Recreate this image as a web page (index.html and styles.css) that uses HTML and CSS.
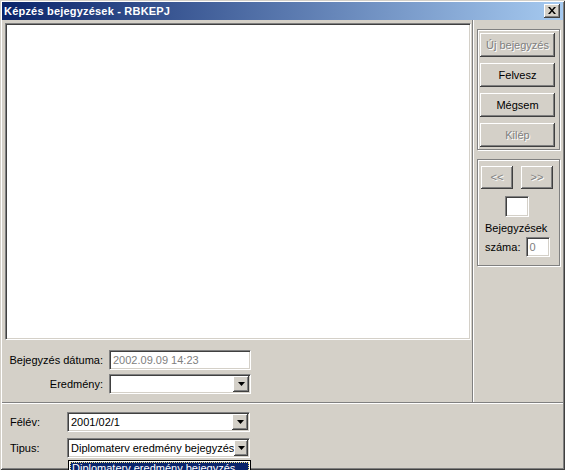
FILE: index.html
```html
<!DOCTYPE html>
<html lang="hu">
<head>
<meta charset="utf-8">
<title>Képzés bejegyzések - RBKEPJ</title>
<link rel="stylesheet" href="styles.css">
</head>
<body>
<div class="window">
  <div class="titlebar">
    <span class="title">Képzés bejegyzések - RBKEPJ</span>
    <span class="close"><svg width="8" height="7" viewBox="0 0 8 7"><path d="M0 0h2l2 2.5 2-2.5h2l-3 3.5 3 3.5h-2l-2-2.5-2 2.5h-2l3-3.5z" fill="#000"/></svg></span>
  </div>
  <div class="body">
    <div class="top">
      <div class="main">
        <div class="list"></div>
        <div class="fields">
          <label class="flabel">Bejegyzés dátuma:</label>
          <div class="edit disabled-text">2002.09.09 14:23</div>
          <label class="flabel">Eredmény:</label>
          <div class="combo">
            <span class="combo-text"></span>
            <span class="drop-btn"><svg width="7" height="4" viewBox="0 0 7 4"><path d="M0 0h7l-3.5 4z" fill="#000"/></svg></span>
          </div>
        </div>
      </div>
      <div class="vsep"></div>
      <div class="side">
        <div class="group group-actions">
          <div class="btn disabled">Új bejegyzés</div>
          <div class="btn">Felvesz</div>
          <div class="btn">Mégsem</div>
          <div class="btn disabled">Kilép</div>
        </div>
        <div class="group group-nav">
          <div class="nav-row">
            <div class="btn nav disabled">&lt;&lt;</div>
            <div class="btn nav disabled">&gt;&gt;</div>
          </div>
          <div class="edit pos"></div>
          <div class="count-label">Bejegyzések</div>
          <div class="count-row">
            <span>száma:</span>
            <div class="edit count disabled-text">0</div>
          </div>
        </div>
      </div>
    </div>
    <div class="hsep"></div>
    <div class="bottom">
      <div class="brow">
        <label class="blabel">Félév:</label>
        <div class="combo wide">
          <span class="combo-text">2001/02/1</span>
          <span class="drop-btn"><svg width="7" height="4" viewBox="0 0 7 4"><path d="M0 0h7l-3.5 4z" fill="#000"/></svg></span>
        </div>
      </div>
      <div class="brow">
        <label class="blabel">Tipus:</label>
        <div class="combo wide">
          <span class="combo-text">Diplomaterv eredmény bejegyzés</span>
          <span class="drop-btn"><svg width="7" height="4" viewBox="0 0 7 4"><path d="M0 0h7l-3.5 4z" fill="#000"/></svg></span>
          <div class="dropdown">
            <div class="dd-item">Diplomaterv eredmény bejegyzés</div>
          </div>
        </div>
      </div>
    </div>
  </div>
</div>
</body>
</html>
```
FILE: styles.css
```css
html, body {
  margin: 0;
  padding: 0;
  overflow: hidden;
  background: #d4d0c8;
}
body {
  font-family: "Liberation Sans", Arial, sans-serif;
  font-size: 11px;
  color: #000;
}
.window {
  position: relative;
  width: 565px;
  height: 470px;
  box-sizing: border-box;
  padding: 2px;
  background: #d4d0c8;
  box-shadow: inset 1px 1px #d4d0c8, inset -1px -1px #404040, inset 2px 2px #fff, inset -2px -2px #808080;
  display: flex;
  flex-direction: column;
}
.titlebar {
  height: 18px;
  flex: none;
  display: flex;
  align-items: center;
  justify-content: space-between;
  background: linear-gradient(to right, #0a246a, #a6caf0);
}
.title {
  color: #fff;
  font-weight: bold;
  font-size: 11px;
  padding-left: 2px;
  letter-spacing: 0.2px;
}
.close {
  width: 16px;
  height: 14px;
  margin-right: 3px;
  background: #d4d0c8;
  box-shadow: inset -1px -1px #404040, inset 1px 1px #fff, inset -2px -2px #808080;
  display: flex;
  align-items: center;
  justify-content: center;
  padding-bottom: 1px;
  box-sizing: border-box;
}
.body {
  flex: 1;
  display: flex;
  flex-direction: column;
}
.top {
  height: 382px;
  display: flex;
  flex: none;
}
.main {
  width: 470px;
  display: flex;
  flex-direction: column;
}
.list {
  margin: 3px 0 0 3px;
  width: 466px;
  height: 317px;
  box-sizing: border-box;
  background: #fff;
  border: 1px solid;
  border-color: #808080 #fff #fff #808080;
  box-shadow: inset 1px 1px #404040, inset -1px -1px #d4d0c8;
}
.fields {
  display: grid;
  grid-template-columns: 98px 142px;
  column-gap: 6px;
  row-gap: 4px;
  padding: 10px 0 0 3px;
}
.flabel {
  text-align: right;
  align-self: center;
}
.edit {
  height: 20px;
  box-sizing: border-box;
  background: #fff;
  border: 1px solid;
  border-color: #808080 #fff #fff #808080;
  box-shadow: inset 1px 1px #404040, inset -1px -1px #d4d0c8;
  padding: 0 3px;
  display: flex;
  align-items: center;
}
.disabled-text {
  color: #808080;
}
.combo {
  position: relative;
  height: 20px;
  box-sizing: border-box;
  background: #fff;
  border: 1px solid;
  border-color: #808080 #fff #fff #808080;
  box-shadow: inset 1px 1px #404040, inset -1px -1px #d4d0c8;
  display: flex;
  align-items: center;
  padding: 1px 1px 1px 3px;
}
.combo-text {
  flex: 1;
  white-space: nowrap;
}
.drop-btn {
  width: 16px;
  height: 16px;
  box-sizing: border-box;
  background: #d4d0c8;
  box-shadow: inset -1px -1px #404040, inset 1px 1px #fff, inset -2px -2px #808080;
  display: flex;
  align-items: center;
  justify-content: center;
}
.vsep {
  width: 2px;
  border-left: 1px solid #808080;
  border-right: 1px solid #fff;
  box-sizing: border-box;
}
.side {
  flex: 1;
  padding-left: 3px;
  display: flex;
  flex-direction: column;
}
.group {
  width: 83px;
  box-sizing: border-box;
  border: 1px solid #808080;
  box-shadow: inset 1px 1px #fff, 1px 1px #fff;
  margin-top: 9px;
}
.group-actions {
  height: 121px;
  padding: 3px 0 0 2px;
  display: flex;
  flex-direction: column;
  gap: 6px;
}
.btn {
  width: 75px;
  height: 24px;
  box-sizing: border-box;
  background: #d4d0c8;
  box-shadow: inset -1px -1px #404040, inset 1px 1px #fff, inset -2px -2px #808080;
  display: flex;
  align-items: center;
  justify-content: center;
  padding-bottom: 1px;
}
.btn.disabled {
  color: #808080;
  text-shadow: 1px 1px #fff;
}
.group-nav {
  height: 107px;
  padding: 6px 0 0 3px;
  display: flex;
  flex-direction: column;
}
.nav-row {
  display: flex;
  gap: 8px;
}
.btn.nav {
  width: 32px;
  height: 23px;
}
.edit.pos {
  width: 24px;
  height: 21px;
  margin: 7px 0 0 24px;
}
.count-label {
  margin: 5px 0 0 4px;
  line-height: 13px;
}
.count-row {
  display: flex;
  align-items: center;
  gap: 6px;
  margin: 2px 0 0 4px;
}
.edit.count {
  width: 24px;
  height: 20px;
  padding: 0 2px;
}
.hsep {
  height: 2px;
  flex: none;
  border-top: 1px solid #808080;
  border-bottom: 1px solid #fff;
  box-sizing: border-box;
}
.bottom {
  flex: 1;
  padding: 8px 0 0 8px;
  display: flex;
  flex-direction: column;
  gap: 6px;
}
.brow {
  display: flex;
  align-items: center;
}
.blabel {
  width: 57px;
}
.combo.wide {
  width: 183px;
}
.dropdown {
  position: absolute;
  left: 0;
  top: 21px;
  width: 183px;
  height: 11px;
  overflow: hidden;
  box-sizing: border-box;
  border: 1px solid #000;
  border-bottom: none;
  background: #fff;
  padding: 1px 1px 0;
}
.dd-item {
  background: #0a246a;
  color: #fff;
  height: 14px;
  line-height: 13px;
  padding-left: 2px;
  outline: 1px dotted #f0e080;
  outline-offset: -1px;
  white-space: nowrap;
}
```
